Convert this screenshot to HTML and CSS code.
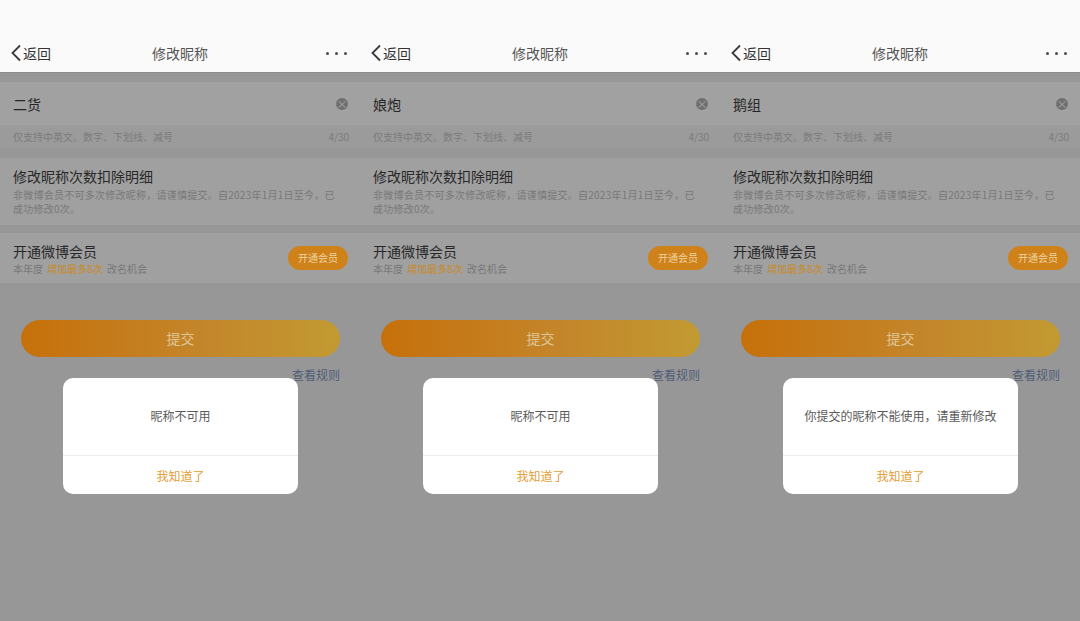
FILE: index.html
```html
<!DOCTYPE html>
<html lang="zh-CN">
<head>
    <meta charset="UTF-8">
    <meta name="viewport" content="width=device-width, initial-scale=1.0">
    <title>修改昵称</title>
    <link rel="stylesheet" href="styles.css">
</head>
<body>
    <div class="screens">
        <!-- 第一屏 -->
        <div class="phone">
            <div class="nav">
                <div class="back">
                    <svg width="12" height="18" viewBox="0 0 12 18"><polyline points="10,1.5 2.5,9 10,16.5" fill="none" stroke="#3a3a3a" stroke-width="1.8"/></svg>
                    <span>返回</span>
                </div>
                <div class="nav-title">修改昵称</div>
                <div class="more"><i></i><i></i><i></i></div>
            </div>
            <div class="content">
                <div class="input-row">
                    <span class="nick">二货</span>
                    <span class="clear">×</span>
                </div>
                <div class="hint-row">
                    <span>仅支持中英文、数字、下划线、减号</span>
                    <span>4/30</span>
                </div>
                <div class="section detail">
                    <div class="sec-title">修改昵称次数扣除明细</div>
                    <p class="sec-desc">非微博会员不可多次修改昵称，请谨慎提交。自2023年1月1日至今，已成功修改0次。</p>
                </div>
                <div class="section vip">
                    <div>
                        <div class="sec-title">开通微博会员</div>
                        <div class="sec-desc">本年度 <span class="hl">增加最多8次</span> 改名机会</div>
                    </div>
                    <span class="vip-btn">开通会员</span>
                </div>
                <div class="submit">提交</div>
                <div class="rules">查看规则</div>
            </div>
            <div class="dialog">
                <div class="dialog-msg">昵称不可用</div>
                <div class="dialog-btn">我知道了</div>
            </div>
        </div>

        <!-- 第二屏 -->
        <div class="phone">
            <div class="nav">
                <div class="back">
                    <svg width="12" height="18" viewBox="0 0 12 18"><polyline points="10,1.5 2.5,9 10,16.5" fill="none" stroke="#3a3a3a" stroke-width="1.8"/></svg>
                    <span>返回</span>
                </div>
                <div class="nav-title">修改昵称</div>
                <div class="more"><i></i><i></i><i></i></div>
            </div>
            <div class="content">
                <div class="input-row">
                    <span class="nick">娘炮</span>
                    <span class="clear">×</span>
                </div>
                <div class="hint-row">
                    <span>仅支持中英文、数字、下划线、减号</span>
                    <span>4/30</span>
                </div>
                <div class="section detail">
                    <div class="sec-title">修改昵称次数扣除明细</div>
                    <p class="sec-desc">非微博会员不可多次修改昵称，请谨慎提交。自2023年1月1日至今，已成功修改0次。</p>
                </div>
                <div class="section vip">
                    <div>
                        <div class="sec-title">开通微博会员</div>
                        <div class="sec-desc">本年度 <span class="hl">增加最多8次</span> 改名机会</div>
                    </div>
                    <span class="vip-btn">开通会员</span>
                </div>
                <div class="submit">提交</div>
                <div class="rules">查看规则</div>
            </div>
            <div class="dialog">
                <div class="dialog-msg">昵称不可用</div>
                <div class="dialog-btn">我知道了</div>
            </div>
        </div>

        <!-- 第三屏 -->
        <div class="phone">
            <div class="nav">
                <div class="back">
                    <svg width="12" height="18" viewBox="0 0 12 18"><polyline points="10,1.5 2.5,9 10,16.5" fill="none" stroke="#3a3a3a" stroke-width="1.8"/></svg>
                    <span>返回</span>
                </div>
                <div class="nav-title">修改昵称</div>
                <div class="more"><i></i><i></i><i></i></div>
            </div>
            <div class="content">
                <div class="input-row">
                    <span class="nick">鹅组</span>
                    <span class="clear">×</span>
                </div>
                <div class="hint-row">
                    <span>仅支持中英文、数字、下划线、减号</span>
                    <span>4/30</span>
                </div>
                <div class="section detail">
                    <div class="sec-title">修改昵称次数扣除明细</div>
                    <p class="sec-desc">非微博会员不可多次修改昵称，请谨慎提交。自2023年1月1日至今，已成功修改0次。</p>
                </div>
                <div class="section vip">
                    <div>
                        <div class="sec-title">开通微博会员</div>
                        <div class="sec-desc">本年度 <span class="hl">增加最多8次</span> 改名机会</div>
                    </div>
                    <span class="vip-btn">开通会员</span>
                </div>
                <div class="submit">提交</div>
                <div class="rules">查看规则</div>
            </div>
            <div class="dialog">
                <div class="dialog-msg">你提交的昵称不能使用，请重新修改</div>
                <div class="dialog-btn">我知道了</div>
            </div>
        </div>
    </div>
</body>
</html>
```

FILE: styles.css
```css
* {
    margin: 0;
    padding: 0;
    box-sizing: border-box;
}

body {
    width: 1080px;
    height: 621px;
    overflow: hidden;
    background: #979797;
    font-family: "Noto Sans CJK SC", "Noto Sans", sans-serif;
}

.screens {
    display: flex;
}

.phone {
    width: 360px;
    height: 621px;
    position: relative;
    background: #979797;
}

/* 顶部导航 */
.nav {
    height: 73px;
    background: #fafafa;
    border-bottom: 1px solid #8c8c8c;
    display: flex;
    align-items: flex-end;
    justify-content: space-between;
    padding: 0 12px 6px 10px;
    position: relative;
}

.back {
    display: flex;
    align-items: center;
    height: 26px;
    font-size: 14px;
    color: #333;
}

.back svg {
    margin-right: 1px;
}

.nav-title {
    position: absolute;
    left: 0;
    right: 0;
    bottom: 6px;
    text-align: center;
    line-height: 26px;
    font-size: 14px;
    color: #555;
    pointer-events: none;
}

.more {
    height: 26px;
    display: flex;
    align-items: center;
    gap: 6px;
    padding-right: 1px;
}

.more i {
    width: 3px;
    height: 3px;
    border-radius: 50%;
    background: #4a4a4a;
}

/* 内容区 */
.content {
    padding-top: 9px;
}

.input-row {
    height: 43px;
    background: #a1a1a1;
    display: flex;
    align-items: center;
    justify-content: space-between;
    padding: 0 12px 0 13px;
}

.nick {
    font-size: 14px;
    color: #262626;
}

.clear {
    width: 12px;
    height: 12px;
    border-radius: 50%;
    background: #707070;
    color: #a3a3a3;
    font-size: 11px;
    line-height: 12px;
    text-align: center;
}

.hint-row {
    height: 23px;
    background: #9b9b9b;
    display: flex;
    align-items: center;
    justify-content: space-between;
    padding: 0 11px 0 13px;
    font-size: 10px;
    color: #7b7b7b;
}

.section {
    background: #a0a0a0;
    padding: 0 12px 0 13px;
}

.detail {
    margin-top: 10px;
    padding-top: 8px;
    padding-right: 22px;
    padding-bottom: 9px;
}

.sec-title {
    font-size: 14px;
    line-height: 20px;
    color: #282828;
}

.sec-desc {
    font-size: 10px;
    line-height: 14px;
    color: #787878;
}

.detail .sec-desc {
    margin-top: 2px;
    letter-spacing: 0.25px;
}

.vip {
    margin-top: 8px;
    height: 50px;
    display: flex;
    align-items: center;
    justify-content: space-between;
}

.vip .sec-desc {
    margin-top: 1px;
}

.hl {
    color: #c98b1f;
    margin: 0 2px;
}

.vip-btn {
    width: 60px;
    height: 24px;
    border-radius: 12px;
    background: #d0821a;
    color: #ecd4a4;
    font-size: 10px;
    line-height: 24px;
    text-align: center;
}

.submit {
    margin: 37px 20px 0 21px;
    height: 37px;
    border-radius: 19px;
    background: linear-gradient(90deg, #c6700a 0%, #c4852a 55%, #c29a32 100%);
    color: #dcc697;
    font-size: 14px;
    line-height: 37px;
    text-align: center;
}

.rules {
    margin: 10px 20px 0 0;
    text-align: right;
    font-size: 12px;
    line-height: 16px;
    color: #4f5d78;
}

/* 弹窗 */
.dialog {
    position: absolute;
    left: 63px;
    top: 378px;
    width: 235px;
    height: 116px;
    background: #fff;
    border-radius: 10px;
    display: flex;
    flex-direction: column;
}

.dialog-msg {
    flex: 1;
    display: flex;
    align-items: center;
    justify-content: center;
    font-size: 12px;
    color: #5a5a5a;
    border-bottom: 1px solid #ececec;
    padding-bottom: 2px;
}

.dialog-btn {
    height: 38px;
    display: flex;
    align-items: center;
    justify-content: center;
    font-size: 12px;
    color: #e49c30;
}
```
